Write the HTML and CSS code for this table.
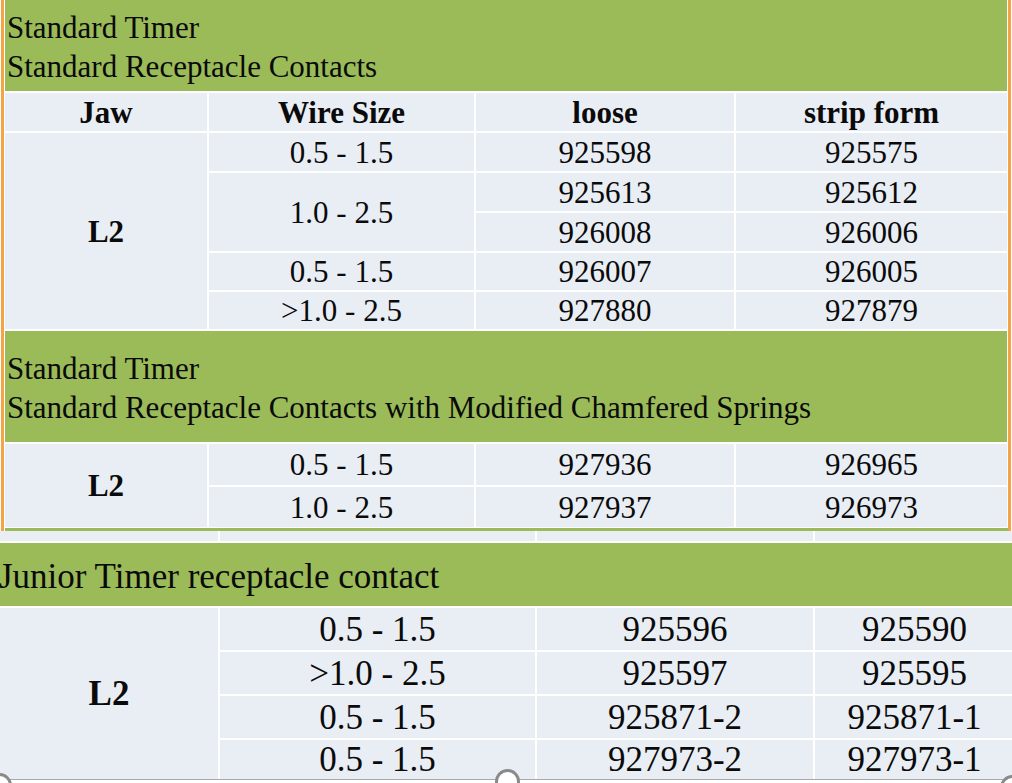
FILE: index.html
```html
<!DOCTYPE html>
<html>
<head>
<meta charset="utf-8">
<link rel="stylesheet" href="styles.css">
</head>
<body>
<div class="slide">
  <section class="top">
    <div class="grid top-grid">
      <div class="band band-t">Standard Timer<br>Standard Receptacle Contacts</div>
      <div class="cell hd">Jaw</div>
      <div class="cell hd">Wire Size</div>
      <div class="cell hd">loose</div>
      <div class="cell hd">strip form</div>

      <div class="cell hd span5">L2</div>
      <div class="cell">0.5 - 1.5</div>
      <div class="cell">925598</div>
      <div class="cell">925575</div>

      <div class="cell span2">1.0 - 2.5</div>
      <div class="cell">925613</div>
      <div class="cell">925612</div>
      <div class="cell">926008</div>
      <div class="cell">926006</div>

      <div class="cell">0.5 - 1.5</div>
      <div class="cell">926007</div>
      <div class="cell">926005</div>

      <div class="cell">&gt;1.0 - 2.5</div>
      <div class="cell">927880</div>
      <div class="cell">927879</div>

      <div class="band band-t">Standard Timer<br>Standard Receptacle Contacts with Modified Chamfered Springs</div>

      <div class="cell hd span2">L2</div>
      <div class="cell">0.5 - 1.5</div>
      <div class="cell">927936</div>
      <div class="cell">926965</div>

      <div class="cell">1.0 - 2.5</div>
      <div class="cell">927937</div>
      <div class="cell">926973</div>
    </div>
  </section>

  <section class="bottom">
    <div class="grid bot-grid">
      <div class="cell"></div>
      <div class="cell"></div>
      <div class="cell"></div>
      <div class="cell"></div>

      <div class="band band-b">Junior Timer receptacle contact</div>

      <div class="cell hd span4">L2</div>
      <div class="cell">0.5 - 1.5</div>
      <div class="cell">925596</div>
      <div class="cell">925590</div>

      <div class="cell">&gt;1.0 - 2.5</div>
      <div class="cell">925597</div>
      <div class="cell">925595</div>

      <div class="cell">0.5 - 1.5</div>
      <div class="cell">925871-2</div>
      <div class="cell">925871-1</div>

      <div class="cell">0.5 - 1.5</div>
      <div class="cell">927973-2</div>
      <div class="cell">927973-1</div>
    </div>
  </section>

  <span class="handle h-left"></span>
  <span class="handle h-mid"></span>
  <span class="handle h-right"></span>
</div>
</body>
</html>
```

FILE: styles.css
```css
html, body {
  margin: 0;
  padding: 0;
  background: #ffffff;
}

body {
  width: 1012px;
  height: 783px;
  overflow: hidden;
  font-family: "Liberation Serif", "Times New Roman", serif;
  color: #0a0a0a;
}

.slide {
  position: relative;
  width: 1012px;
  height: 783px;
  overflow: hidden;
  background: #ffffff;
}

.top {
  position: relative;
  z-index: 2;
  margin-left: 1px;
  width: 1003px;
  border-left: 3px solid #f4a446;
  border-right: 3px solid #f4a446;
  padding-left: 1px;
  background: #ffffff;
}

.grid {
  display: grid;
  gap: 2px;
  background: #ffffff;
}

.top-grid {
  grid-template-columns: 202px 265px 258px 271px;
  grid-template-rows: 91px 38px 38px 38px 38px 37px 37px 111px 41px 40px;
  font-size: 31px;
  padding-bottom: 1px;
  border-bottom: 3px solid #9bbb59;
}

.band {
  grid-column: 1 / -1;
  background: #9bbb59;
  display: flex;
  align-items: center;
  padding-left: 2px;
  line-height: 38px;
  color: #0a0a0a;
}

.band-t {
  line-height: 39px;
  padding-top: 2px;
}

.cell {
  background: #e9edf4;
  display: flex;
  align-items: center;
  justify-content: center;
  line-height: 1;
  white-space: nowrap;
}

.hd {
  font-weight: bold;
}

.span2 { grid-row: span 2; }
.span4 { grid-row: span 4; }
.span5 { grid-row: span 5; }

.bottom {
  position: relative;
  z-index: 1;
  width: 1014px;
  border-bottom: 1px solid #a9a9a9;
}

.bot-grid {
  grid-template-columns: 218px 315px 276px 199px;
  grid-template-rows: 10px 63px 42px 42px 42px 39px;
  font-size: 35px;
}

.band-b {
  padding-left: 0;
  margin-left: -1px;
  line-height: 40px;
  padding-top: 4px;
}

.handle {
  position: absolute;
  width: 19px;
  height: 19px;
  border: 3px solid #8a8a8a;
  border-radius: 50%;
  background: #ffffff;
  z-index: 3;
}

.h-mid {
  left: 495px;
  top: 769px;
}

.h-left {
  left: -13px;
  top: 773px;
}

.h-right {
  left: 1000px;
  top: 775px;
}
```
